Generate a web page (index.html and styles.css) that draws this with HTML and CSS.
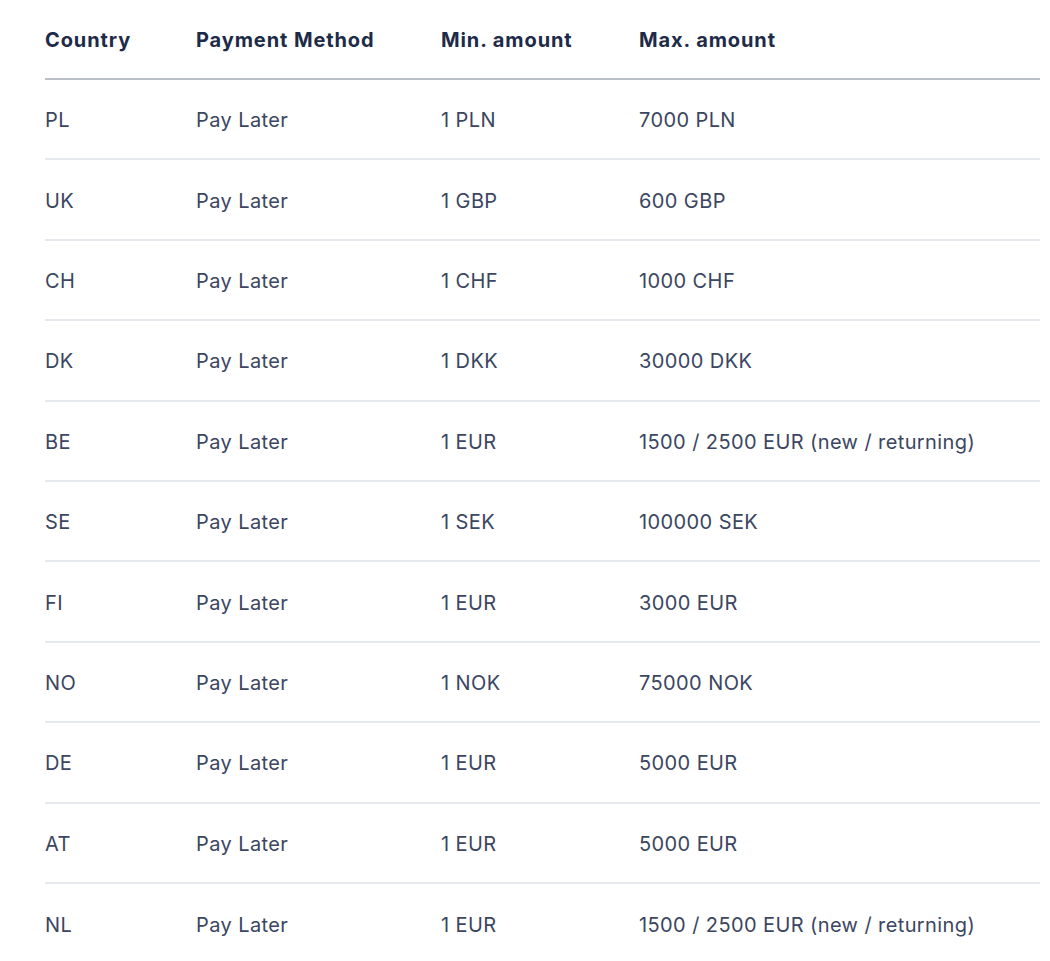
FILE: index.html
```html
<!DOCTYPE html>
<html>
<head>
<meta charset="utf-8">
<link rel="stylesheet" href="styles.css">
</head>
<body>
<table class="limits">
  <thead>
    <tr><th class="c1">Country</th><th class="c2">Payment Method</th><th class="c3">Min. amount</th><th class="c4">Max. amount</th></tr>
  </thead>
  <tbody>
    <tr><td>PL</td><td>Pay Later</td><td>1 PLN</td><td>7000 PLN</td></tr>
    <tr><td>UK</td><td>Pay Later</td><td>1 GBP</td><td>600 GBP</td></tr>
    <tr><td>CH</td><td>Pay Later</td><td>1 CHF</td><td>1000 CHF</td></tr>
    <tr><td>DK</td><td>Pay Later</td><td>1 DKK</td><td>30000 DKK</td></tr>
    <tr><td>BE</td><td>Pay Later</td><td>1 EUR</td><td>1500 / 2500 EUR (new / returning)</td></tr>
    <tr><td>SE</td><td>Pay Later</td><td>1 SEK</td><td>100000 SEK</td></tr>
    <tr><td>FI</td><td>Pay Later</td><td>1 EUR</td><td>3000 EUR</td></tr>
    <tr><td>NO</td><td>Pay Later</td><td>1 NOK</td><td>75000 NOK</td></tr>
    <tr><td>DE</td><td>Pay Later</td><td>1 EUR</td><td>5000 EUR</td></tr>
    <tr><td>AT</td><td>Pay Later</td><td>1 EUR</td><td>5000 EUR</td></tr>
    <tr><td>NL</td><td>Pay Later</td><td>1 EUR</td><td>1500 / 2500 EUR (new / returning)</td></tr>
  </tbody>
</table>
</body>
</html>
```
FILE: styles.css
```css
html, body {
  margin: 0;
  padding: 0;
  background: #ffffff;
}
body {
  padding: 0 10px 0 45px;
  font-family: Inter, "Noto Sans", sans-serif;
}
.limits {
  width: 995px;
  border-collapse: collapse;
  table-layout: fixed;
}
.limits th, .limits td {
  padding: 0;
  text-align: left;
  vertical-align: middle;
  font-size: 20px;
  white-space: nowrap;
  box-sizing: border-box;
}
.limits th {
  height: 79px;
  padding-top: 2px;
  font-weight: 700;
  letter-spacing: 0.9px;
  color: #1d2b48;
  border-bottom: 2px solid #b9c0ca;
}
.limits td {
  height: 80.4px;
  padding-top: 2px;
  font-weight: 400;
  letter-spacing: 0.4px;
  color: #3b4661;
  border-bottom: 2px solid #e5e8ed;
}
.limits tbody tr:last-child td {
  border-bottom: none;
}
.c1 { width: 151px; }
.c2 { width: 245px; }
.c3 { width: 198px; }
.c4 { width: auto; }
```
